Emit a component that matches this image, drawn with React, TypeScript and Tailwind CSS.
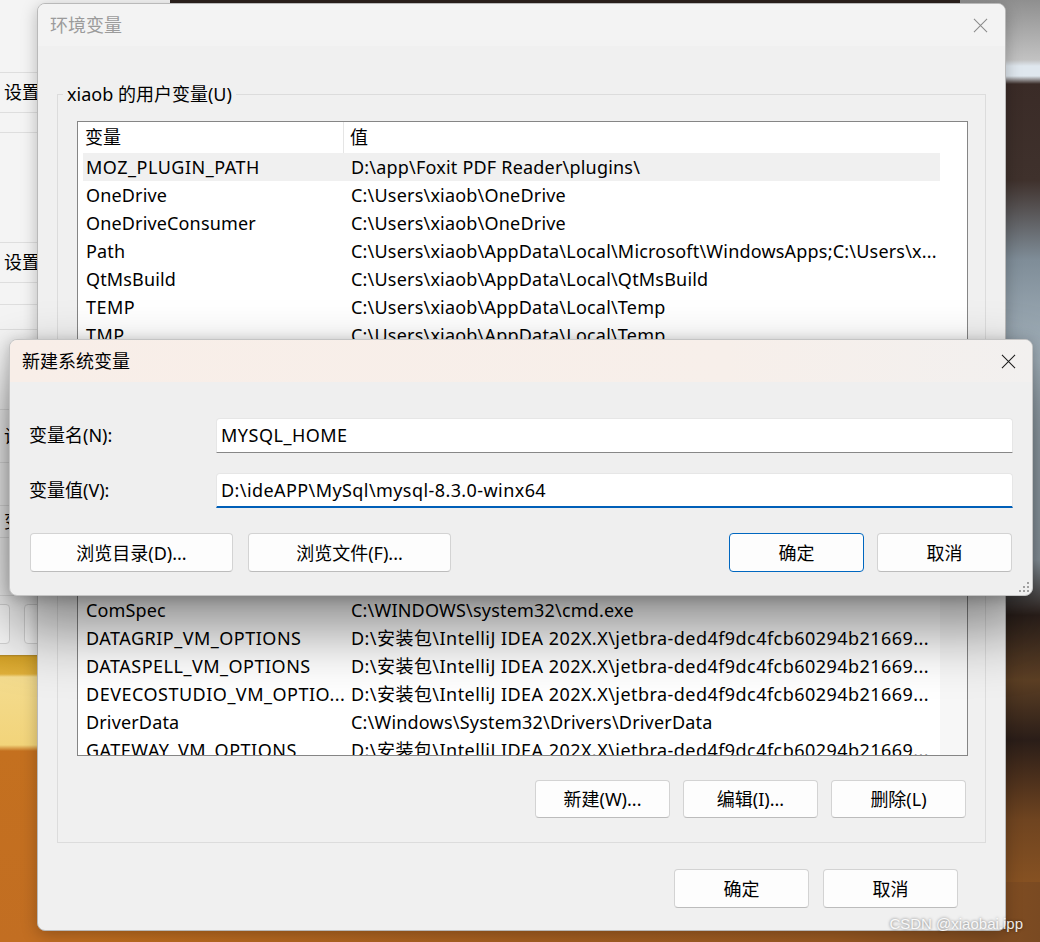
import React from "react";

const ui = "font-['Noto_Sans','Noto_Sans_CJK_SC',sans-serif]";

const userVars: [string, string][] = [
  ["MOZ_PLUGIN_PATH", "D:\\app\\Foxit PDF Reader\\plugins\\"],
  ["OneDrive", "C:\\Users\\xiaob\\OneDrive"],
  ["OneDriveConsumer", "C:\\Users\\xiaob\\OneDrive"],
  ["Path", "C:\\Users\\xiaob\\AppData\\Local\\Microsoft\\WindowsApps;C:\\Users\\x..."],
  ["QtMsBuild", "C:\\Users\\xiaob\\AppData\\Local\\QtMsBuild"],
  ["TEMP", "C:\\Users\\xiaob\\AppData\\Local\\Temp"],
  ["TMP", "C:\\Users\\xiaob\\AppData\\Local\\Temp"],
];

const jet = "D:\\安装包\\IntelliJ IDEA 202X.X\\jetbra-ded4f9dc4fcb60294b21669...";

const sysVars: [string, string][] = [
  ["ComSpec", "C:\\WINDOWS\\system32\\cmd.exe"],
  ["DATAGRIP_VM_OPTIONS", jet],
  ["DATASPELL_VM_OPTIONS", jet],
  ["DEVECOSTUDIO_VM_OPTIO...", jet],
  ["DriverData", "C:\\Windows\\System32\\Drivers\\DriverData"],
  ["GATEWAY_VM_OPTIONS", jet],
];

function CloseIcon({ className }: { className?: string }) {
  return (
    <svg viewBox="0 0 16 16" className={className} fill="none" stroke="currentColor" strokeWidth="1.1">
      <path d="M1 1L15 15M15 1L1 15" />
    </svg>
  );
}

function Btn({
  children,
  primary,
  className = "",
}: {
  children?: React.ReactNode;
  primary?: boolean;
  className?: string;
}) {
  return (
    <button
      type="button"
      className={`flex shrink-0 items-center justify-center rounded-[4px] border bg-[#fdfdfd] text-[18px] leading-none text-black ${
        primary ? "border-[#0067c0]" : "border-[#d3d3d3] border-b-[#bcbcbc]"
      } ${className}`}
    >
      {children}
    </button>
  );
}

function Row({ name, value, selected }: { name: string; value: string; selected?: boolean }) {
  const caps = /[A-Z]{3}/.test(name);
  const wide = value.includes("安装包");
  return (
    <div
      className={`ml-[5px] flex h-[28px] shrink-0 items-center text-[18px] leading-[28px] text-black ${
        selected ? "bg-[#f0f0f0]" : ""
      }`}
    >
      <div
        className={`w-[261px] shrink-0 overflow-hidden whitespace-nowrap pl-[3px] ${
          caps ? "tracking-[0.5px]" : "tracking-[0.15px]"
        }`}
      >
        {name}
      </div>
      <div
        className={`min-w-0 flex-1 whitespace-nowrap pl-[7px] ${
          wide ? "tracking-[0.45px]" : "tracking-[0.2px]"
        }`}
      >
        {value}
      </div>
    </div>
  );
}

function ListHeader() {
  return (
    <div className="flex h-[31px] shrink-0 items-center text-[18px] text-black">
      <div className="flex h-full w-[266px] items-center border-r border-[#e5e5e5] pl-[7px]">变量</div>
      <div className="flex h-full flex-1 items-center pl-[6px]">值</div>
    </div>
  );
}

function GroupBox({ label, children }: { label?: string; children: React.ReactNode }) {
  return (
    <div className="relative border border-[#dcdcdc] pb-[24px] pl-[19px] pr-[17px] pt-[26px]">
      {label && (
        <span className="absolute left-[5px] top-[-14px] bg-[#f0f0f0] px-[4px] text-[18px] leading-[26px] text-black">
          {label}
        </span>
      )}
      {children}
    </div>
  );
}

function BackgroundWindow() {
  const rows = [73, 40, 20, 110, 40, 22, 25, 80, 53, 43, 32, 58];
  const labels: Record<number, string> = { 1: "设置", 4: "设置", 8: "设置", 10: "变量" };
  return (
    <div className="absolute left-0 top-0 flex h-[655px] w-[170px] flex-col bg-[#f4f4f4]">
      {rows.map((h, i) => (
        <div
          key={i}
          style={{ height: h }}
          className="flex shrink-0 items-center border-b border-[#dedede] pl-[4px] text-[18px] text-black"
        >
          {labels[i]}
        </div>
      ))}
      <div className="mt-[8px] flex gap-[14px]">
        <div className="ml-[-10px] h-[40px] w-[20px] rounded-[4px] border border-[#d6d6d6] bg-[#fbfbfb]" />
        <div className="h-[40px] w-[60px] rounded-[4px] border border-[#d6d6d6] bg-[#fbfbfb]" />
      </div>
    </div>
  );
}

export default function App() {
  return (
    <div className={`relative h-[942px] w-[1040px] overflow-hidden bg-[#2b201c] ${ui}`}>
      {/* desktop */}
      <div className="absolute right-0 top-0 h-full w-[80px] bg-[linear-gradient(180deg,#8f8f8f_0px,#c2c2c2_60px,#dfe7ee_66px,#dfe7ee_76px,#3a2b27_84px,#3f312c_180px,#7f8d98_260px,#a6b4be_360px,#9aa7b0_560px,#2d211c_615px,#5c3f24_680px,#2a1d18_740px,#6f4420_820px,#9c5e24_942px)]" />
      <div className="absolute bottom-0 left-0 h-[60px] w-full bg-[linear-gradient(90deg,#c6711f,#a65f21_50%,#9a5a22_80%,#7a4a22)]" />
      <div className="absolute left-0 top-[650px] h-[292px] w-[80px] bg-[linear-gradient(180deg,#4a3a28_0px,#d4a227_7px,#e0b03a_24px,#f4dc8f_27px,#f2d47a_95px,#c4701f_101px,#c26e22_292px)]" />
      <BackgroundWindow />

      {/* 环境变量 */}
      <div className="absolute left-[37px] top-[3px] flex h-[928px] w-[969px] flex-col overflow-hidden rounded-[8px] border border-[#b9b9b9] bg-[#f0f0f0] shadow-[0_4px_16px_rgba(0,0,0,0.25)]">
        <div className="flex h-[42px] shrink-0 items-center justify-between bg-[#f3f3f3] pl-[12px] pr-[17px]">
          <span className="text-[18px] text-[#9b9b9b]">环境变量</span>
          <CloseIcon className="h-[15px] w-[15px] text-[#8a8a8a]" />
        </div>
        <div className="flex flex-1 flex-col px-[19px] pt-[48px]">
          <GroupBox label="xiaob 的用户变量(U)">
            <div className="flex h-[247px] overflow-hidden border border-[#858585] bg-white">
              <div className="flex w-[862px] shrink-0 flex-col">
                <ListHeader />
                {userVars.map(([n, v], i) => (
                  <Row key={n} name={n} value={v} selected={i === 0} />
                ))}
              </div>
              <div className="flex-1 bg-white" />
            </div>
            <div className="mt-[24px] h-[38px]" />
          </GroupBox>
          <div className="mt-[27px]">
            <GroupBox>
              <div className="flex h-[247px] overflow-hidden border border-[#858585] bg-white">
                <div className="flex w-[862px] shrink-0 flex-col">
                  <ListHeader />
                  <div className="h-[55px] shrink-0" />
                  {sysVars.map(([n, v]) => (
                    <Row key={n} name={n} value={v} />
                  ))}
                </div>
                <div className="flex-1 bg-[#f7f7f7]" />
              </div>
              <div className="mr-[2px] mt-[24px] flex justify-end gap-[13px]">
                <Btn className="h-[38px] w-[135px]">新建(W)...</Btn>
                <Btn className="h-[38px] w-[135px]">编辑(I)...</Btn>
                <Btn className="h-[38px] w-[135px]">删除(L)</Btn>
              </div>
            </GroupBox>
          </div>
          <div className="mt-[26px] flex justify-end gap-[14px] pr-[28px]">
            <Btn className="h-[39px] w-[135px]">确定</Btn>
            <Btn className="h-[39px] w-[135px]">取消</Btn>
          </div>
        </div>
      </div>

      {/* 新建系统变量 */}
      <div className="absolute left-[9px] top-[339px] flex h-[257px] w-[1024px] flex-col overflow-hidden rounded-[8px] border border-[#c4c4c4] bg-[#efefef] shadow-[0_32px_64px_rgba(0,0,0,0.48),0_2px_14px_rgba(0,0,0,0.22)]">
        <div className="flex h-[42px] shrink-0 items-center justify-between bg-[linear-gradient(90deg,#f8eee8,#f7efea_70%,#f2f0ef)] pl-[12px] pr-[16px]">
          <span className="text-[18px] text-black">新建系统变量</span>
          <CloseIcon className="h-[15px] w-[15px] text-[#1a1a1a]" />
        </div>
        <div className="flex flex-1 flex-col pt-[36px]">
          <div className="flex items-center px-[19px]">
            <div className="w-[187px] text-[18px] text-black">变量名(N):</div>
            <div className="flex h-[35px] flex-1 items-center rounded-t-[4px] border border-[#e6e6e6] border-b-[#878787] bg-white pl-[4px] text-[18px] tracking-[0.5px] text-black">
              MYSQL_HOME
            </div>
          </div>
          <div className="mt-[20px] flex items-center px-[19px]">
            <div className="w-[187px] text-[18px] text-black">变量值(V):</div>
            <div className="flex h-[35px] flex-1 items-center rounded-t-[4px] border border-b-2 border-[#e6e6e6] border-b-[#005fb8] bg-white pl-[4px] text-[18px] tracking-[0.42px] text-black">
              D:\ideAPP\MySql\mysql-8.3.0-winx64
            </div>
          </div>
          <div className="mt-[25px] flex items-center px-[20px]">
            <Btn className="h-[39px] w-[203px]">浏览目录(D)...</Btn>
            <Btn className="ml-[15px] h-[39px] w-[203px]">浏览文件(F)...</Btn>
            <div className="flex-1" />
            <Btn primary className="h-[39px] w-[135px]">确定</Btn>
            <Btn className="ml-[13px] h-[39px] w-[135px]">取消</Btn>
          </div>
        </div>
        <svg className="absolute bottom-[3px] right-[3px] h-[10px] w-[10px] text-[#a0a0a0]" viewBox="0 0 10 10" fill="currentColor">
          <rect x="8" y="0" width="2" height="2" />
          <rect x="4" y="4" width="2" height="2" />
          <rect x="8" y="4" width="2" height="2" />
          <rect x="0" y="8" width="2" height="2" />
          <rect x="4" y="8" width="2" height="2" />
          <rect x="8" y="8" width="2" height="2" />
        </svg>
      </div>

      <div className="absolute bottom-[8px] right-[17px] font-['Liberation_Sans',sans-serif] text-[15px] leading-[20px] text-white/90 [text-shadow:0_0_3px_rgba(0,0,0,0.55)]">
        CSDN @xiaobai.ipp
      </div>
    </div>
  );
}
